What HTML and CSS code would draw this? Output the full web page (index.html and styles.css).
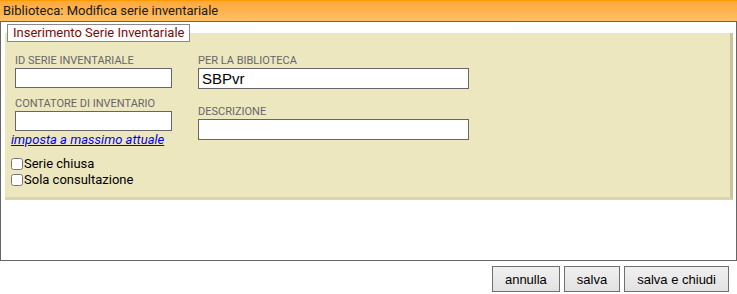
FILE: index.html
```html
<!DOCTYPE html>
<html>
  <head>
    <title>Biblioteca: Modifica serie inventariale</title>
    <link rel="stylesheet" href="styles.css">
  </head>
  <body>
    <div class="titlebar">Biblioteca: Modifica serie inventariale</div>

    <div class="dialog-body">
      <fieldset class="panel">
        <legend>Inserimento Serie Inventariale</legend>
        <div class="cols">
          <div class="col col-left">
            <label for="idserie">ID SERIE INVENTARIALE</label>
            <input type="text" id="idserie" class="input-short" />

            <label for="contatore" class="label-second">CONTATORE DI INVENTARIO</label>
            <input type="text" id="contatore" class="input-short" />
            <a href="#" class="link-max">imposta a massimo attuale</a>
          </div>
          <div class="col col-right">
            <label for="biblioteca">PER LA BIBLIOTECA</label>
            <input type="text" id="biblioteca" class="input-long" value="SBPvr" />

            <label for="descrizione" class="label-second-right">DESCRIZIONE</label>
            <input type="text" id="descrizione" class="input-long" />
          </div>
        </div>

        <div class="checks">
          <label class="check"><input type="checkbox" />Serie chiusa</label>
          <label class="check"><input type="checkbox" />Sola consultazione</label>
        </div>
      </fieldset>
    </div>

    <div class="buttons">
      <button type="button">annulla</button>
      <button type="button">salva</button>
      <button type="button">salva e chiudi</button>
    </div>
  </body>
</html>
```

FILE: styles.css
```css
body {
  margin: 0;
  width: 737px;
  font-family: Roboto, "DejaVu Sans", sans-serif;
  background: #fff;
  color: #000;
}

/* Title bar */
.titlebar {
  height: 20px;
  line-height: 20px;
  padding-left: 3px;
  border-top: 1px solid #ff9a00;
  background: linear-gradient(#ffa83c, #ffbf62);
  font-size: 13px;
  color: #1a1a1a;
}

/* Dialog body */
.dialog-body {
  box-sizing: border-box;
  height: 240px;
  border: 1px solid #666;
  padding: 0 3px 0 4px;
}

.panel {
  margin: 2px 0 0 0;
  padding: 12px 0 9px 10px;
  border: 0;
  border-right: 3px solid #cac49c;
  border-bottom: 3px solid #dcd5ab;
  background: #ede7c0;
  min-width: 0;
}

.panel legend {
  margin-left: -8px;
  padding: 0 5px 0 5px;
  height: 16px;
  line-height: 16px;
  background: #fff;
  border: 1px solid #888;
  font-size: 13px;
  color: #7a0a0a;
}

.cols {
  display: flex;
  gap: 26px;
}

.col {
  display: flex;
  flex-direction: column;
  align-items: flex-start;
}

label {
  font-size: 11px;
  color: #666;
  line-height: 13px;
  margin-bottom: 1px;
}

.label-second {
  margin-top: 9px;
}

.label-second-right {
  margin-top: 16px;
}

input[type="text"] {
  height: 20px;
  box-sizing: border-box;
  border: 1px solid #666;
  background: #fff;
  padding: 0 3px;
  font-family: "Liberation Sans", sans-serif;
  font-size: 15px;
  color: #000;
  margin: 0;
}

.input-short {
  width: 157px;
}

.input-long {
  width: 271px;
  height: 21px !important;
}

.link-max {
  margin-top: 1px;
  margin-left: -4px;
  font-size: 13px;
  line-height: 15px;
  font-style: italic;
  color: #00e;
  text-decoration: underline;
}

.checks {
  margin-top: 9px;
  margin-left: -4px;
}

.check {
  display: flex;
  align-items: center;
  font-size: 13px;
  color: #000;
  line-height: 16px;
  margin: 0;
}

.check input {
  width: 12px;
  height: 12px;
  margin: 0 1px 0 0;
}

/* Buttons */
.buttons {
  display: flex;
  justify-content: flex-end;
  gap: 4px;
  padding: 5px 8px 0 0;
}

.buttons button {
  height: 26px;
  padding: 0 12px;
  border: 1px solid #707070;
  background: linear-gradient(#f0f0f0, #e2e2e2);
  font-family: "Liberation Sans", sans-serif;
  font-size: 13px;
  color: #000;
}
```
